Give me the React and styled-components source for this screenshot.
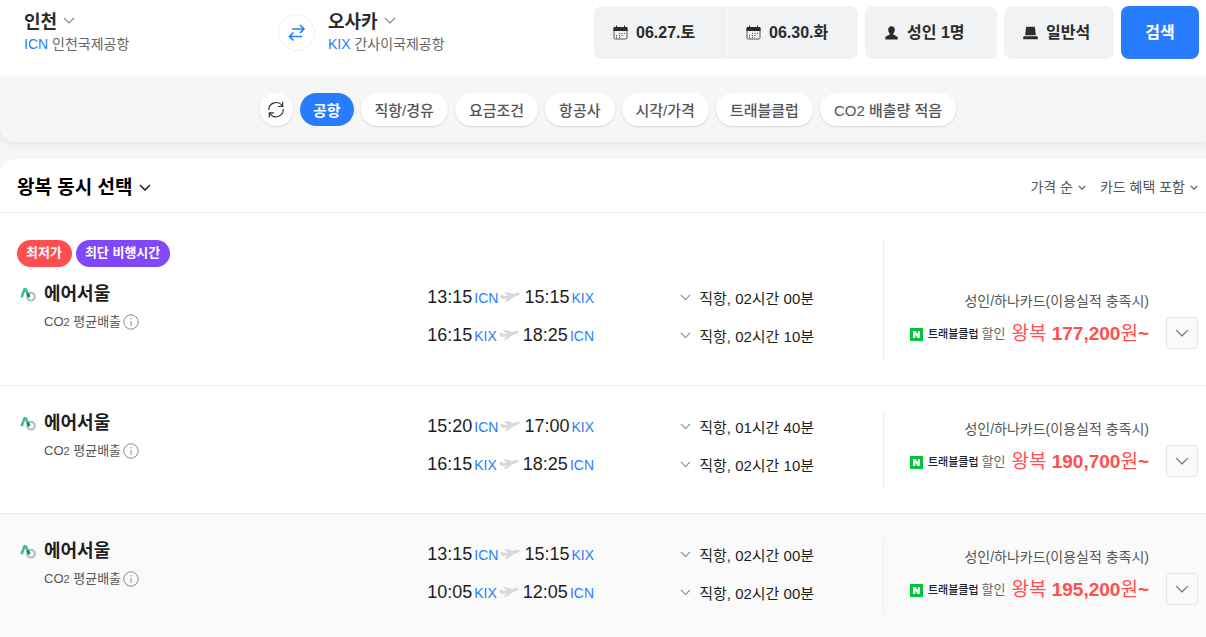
import React, { useState } from 'react';
import styled, { createGlobalStyle } from 'styled-components';

const BLUE = '#287dff';

const trips = [
  {
    id: 1,
    badges: true,
    price: '177,200',
    legs: [
      { from: 'ICN', depart: '13:15', to: 'KIX', arrive: '15:15', duration: '02시간 00분' },
      { from: 'KIX', depart: '16:15', to: 'ICN', arrive: '18:25', duration: '02시간 10분' },
    ],
  },
  {
    id: 2,
    price: '190,700',
    legs: [
      { from: 'ICN', depart: '15:20', to: 'KIX', arrive: '17:00', duration: '01시간 40분' },
      { from: 'KIX', depart: '16:15', to: 'ICN', arrive: '18:25', duration: '02시간 10분' },
    ],
  },
  {
    id: 3,
    shaded: true,
    price: '195,200',
    legs: [
      { from: 'ICN', depart: '13:15', to: 'KIX', arrive: '15:15', duration: '02시간 00분' },
      { from: 'KIX', depart: '10:05', to: 'ICN', arrive: '12:05', duration: '02시간 00분' },
    ],
  },
];

const filters = ['공항', '직항/경유', '요금조건', '항공사', '시각/가격', '트래블클럽', 'CO2 배출량 적음'];

function Chevron({ width = 12, color = '#888', stroke = 1.2 }) {
  return (
    <svg width={width} height={width / 2 + 1} viewBox="0 0 12 7" fill="none" aria-hidden="true">
      <path d="M1 1l5 5 5-5" stroke={color} strokeWidth={stroke} />
    </svg>
  );
}

function CalendarIcon() {
  return (
    <svg width="15" height="15" viewBox="0 0 15 15" aria-hidden="true">
      <rect x="1" y="2.5" width="13" height="11.5" rx="1.2" fill="#f1f2f4" stroke="#555" />
      <path d="M.5 3c0-.6.4-1 1-1h12c.6 0 1 .4 1 1v3H.5zM3 .5h1v2H3zM11 .5h1v2h-1z" fill="#2b2b2b" />
      <path d="M6 8.500h1M8.500 8.500h1M11 8.500h1M3 10.500h1M6 10.500h1M8.500 10.500h1M3 12.300h1M6 12.300h1" stroke="#444" />
    </svg>
  );
}

function PersonIcon() {
  return (
    <svg width="15" height="14" viewBox="0 0 15 14" aria-hidden="true">
      <path d="M7.500 .3c2 0 3.400 1.400 3.300 3.500 0 1.600-.6 2.800-1.500 3.600v1.200c.6.700 1.700.9 2.900 1.400 1.100.5 1.500 1.100 1.500 2.200v1.300H1.300v-1.300c0-1.100.4-1.700 1.500-2.200 1.200-.5 2.300-.7 2.900-1.400V7.400C4.800 6.600 4.200 5.400 4.200 3.800 4.100 1.700 5.500.3 7.500.3z" fill="#2b2b2b" />
    </svg>
  );
}

function SeatIcon() {
  return (
    <svg width="15" height="14" viewBox="0 0 15 14" aria-hidden="true">
      <path d="M4.200 .8h6.600c.7 0 1.100.4 1.200 1l.8 7.400H2.200L3 1.800c.1-.6.500-1 1.200-1zM.8 10.200h13.400l.6.8v2.300H.2V11z" fill="#2b2b2b" />
    </svg>
  );
}

function SwapIcon() {
  return (
    <svg width="18" height="18" viewBox="0 0 18 18" fill="none" aria-hidden="true">
      <path d="M4 5h11.500M12 1l4 4-4 4M14 12.500H2M5.500 8.500l-4 4 4 4" stroke={BLUE} strokeWidth="1.700" />
    </svg>
  );
}

function RefreshIcon() {
  return (
    <svg width="18" height="18" viewBox="0 0 18 18" fill="none" aria-hidden="true">
      <path d="M1.800 9A7.200 7.200 0 0 1 15.300 5.300M15.700 .8v4.700H11M16.200 8A7.200 7.200 0 0 1 2.700 12M2.300 16.500v-4.700H7" stroke="#333" strokeWidth="1.200" />
    </svg>
  );
}

function PlaneIcon() {
  return (
    <svg width="20" height="12" viewBox="0 0 20 12" aria-hidden="true">
      <path d="M.2 4.200l1.900-.5 2.400 1.200 3.300-.4-3.600-3L6.700.9l6.300 2.200 3.400-1.100c1.500-.5 3-.3 3.300.5.300.9-.6 1.800-2 2.300l-4.500 1.700-5.400 4.100-3 .6 2-3.700-3 .4C2.600 8 1.600 7.600 1 6.700z" fill="#d8d9db" />
    </svg>
  );
}

function AirSeoulLogo() {
  return (
    <svg width="16" height="16" viewBox="0 0 16 16" fill="none" aria-hidden="true">
      <circle cx="11" cy="10.700" r="3.800" stroke="#b8bdb9" strokeWidth="2.200" />
      <path d="M1.600 11.200L4.400 3.400h1.400l3.200 7.400" stroke="#3dbd9c" strokeWidth="2.600" strokeLinejoin="round" />
      <path d="M7.600 7.500l1.700 3.600" stroke="#148276" strokeWidth="2.600" />
    </svg>
  );
}

function InfoIcon() {
  return (
    <svg width="16" height="16" viewBox="0 0 16 16" fill="none" aria-hidden="true">
      <circle cx="8" cy="8" r="7.200" stroke="#8b8b8b" />
      <path d="M8 7v5M8 4v1.500" stroke="#8b8b8b" />
    </svg>
  );
}

function NaverIcon() {
  return (
    <svg width="13" height="13" viewBox="0 0 13 13" aria-hidden="true">
      <path d="M0 0h13v13H0z" fill="#03c341" />
      <path d="M3 3h2.500l2.200 3.300V3H10v7H7.500L5.300 6.700V10H3z" fill="#fff" />
    </svg>
  );
}

function Trip({ trip }) {
  return (
    <TripRow $shaded={trip.shaded}>
      {trip.badges && (
        <Badges>
          <Badge $color="#ff4e50">최저가</Badge>
          <Badge $color="#8048f8">최단 비행시간</Badge>
        </Badges>
      )}
      <Airline>
        <AirSeoulLogo />
        <div>
          <AirlineName>에어서울</AirlineName>
          <Emission>
            <span>CO<small>2</small> 평균배출</span>
            <IconButton type="button" aria-label="평균배출 안내"><InfoIcon /></IconButton>
          </Emission>
        </div>
      </Airline>
      <Legs>
        {trip.legs.map(leg => (
          <Leg key={leg.from}>
            <Route>
              <Time>{leg.depart}</Time>
              <Code>{leg.from}</Code>
              <PlaneIcon />
              <Time>{leg.arrive}</Time>
              <Code>{leg.to}</Code>
            </Route>
            <Duration type="button">
              <Chevron width={11} />
              {`직항, ${leg.duration}`}
            </Duration>
          </Leg>
        ))}
      </Legs>
      <Fare $tall={trip.badges}>
        <FareText>
          <Condition>성인/하나카드(이용실적 충족시)</Condition>
          <PriceLine>
            <NaverIcon />
            <Club>트래블클럽</Club>
            <Discount>할인</Discount>
            <Price>왕복 <b>{trip.price}</b>원<b>~</b></Price>
          </PriceLine>
        </FareText>
        <MoreButton type="button" aria-label="요금 더보기">
          <Chevron width={14} color="#666" stroke={1} />
        </MoreButton>
      </Fare>
    </TripRow>
  );
}

function App() {
  const [active, setActive] = useState('공항');

  return (
    <>
      <GlobalStyle />
      <SearchBar>
        <Airports>
          <Airport>
            <City type="button">인천 <Chevron /></City>
            <AirportName><em>ICN</em> 인천국제공항</AirportName>
          </Airport>
          <SwapButton type="button" aria-label="출발지 도착지 바꾸기"><SwapIcon /></SwapButton>
          <Airport>
            <City type="button">오사카 <Chevron /></City>
            <AirportName><em>KIX</em> 간사이국제공항</AirportName>
          </Airport>
        </Airports>
        <Options>
          <Dates>
            <Option type="button"><CalendarIcon />06.27.토</Option>
            <Option type="button"><CalendarIcon />06.30.화</Option>
          </Dates>
          <Option type="button"><PersonIcon />성인 1명</Option>
          <Option type="button" $narrow><SeatIcon />일반석</Option>
          <SearchButton type="button">검색</SearchButton>
        </Options>
      </SearchBar>

      <FilterBar>
        <RefreshButton type="button" aria-label="필터 초기화"><RefreshIcon /></RefreshButton>
        {filters.map(name => (
          <Chip key={name} type="button" $active={name === active} onClick={() => setActive(name)}>
            {name}
          </Chip>
        ))}
      </FilterBar>

      <Results>
        <ResultsHeader>
          <Heading>
            <button type="button">왕복 동시 선택 <Chevron color="#222" stroke={1.6} /></button>
          </Heading>
          <Sorts>
            <Sort type="button">가격 순 <Chevron width={8} color="#555" stroke={1.6} /></Sort>
            <Sort type="button">카드 혜택 포함 <Chevron width={8} color="#555" stroke={1.6} /></Sort>
          </Sorts>
        </ResultsHeader>
        {trips.map(trip => <Trip key={trip.id} trip={trip} />)}
      </Results>
    </>
  );
}

const GlobalStyle = createGlobalStyle`
  * {
    box-sizing: border-box;
  }

  body {
    margin: 0;
    background: #f6f6f6;
    color: #1e1e1e;
    font-family: "Liberation Sans", "Noto Sans CJK KR", sans-serif;
    overflow: hidden;
  }

  button {
    margin: 0;
    padding: 0;
    border: 0;
    background: none;
    color: inherit;
    font: inherit;
    white-space: nowrap;
    cursor: pointer;
  }

  svg {
    flex: none;
  }
`;

const SearchBar = styled.header`
  display: flex;
  justify-content: space-between;
  align-items: flex-start;
  padding: 6px 7px 17px 24px;
  background: #fff;
`;

const Airports = styled.div`
  display: flex;
  align-items: flex-start;
`;

const Airport = styled.div`
  min-width: 254px;

  &:last-child {
    min-width: 0;
    margin-left: 13px;
  }
`;

const City = styled.button`
  display: flex;
  align-items: center;
  gap: 6px;
  height: 28px;
  color: #2b2b2b;
  font-size: 18px;
  font-weight: 700;
`;

const AirportName = styled.div`
  color: #666;
  font-size: 14px;
  line-height: 20px;

  em {
    color: ${BLUE};
    font-style: normal;
  }
`;

const SwapButton = styled.button`
  display: grid;
  place-items: center;
  width: 37px;
  height: 37px;
  margin-top: 8px;
  border: 1px solid #eee;
  border-radius: 50%;
`;

const Options = styled.div`
  display: flex;
  gap: 7px;
`;

const Dates = styled.div`
  display: flex;
  gap: 1px;

  button:first-child {
    border-radius: 8px 0 0 8px;
  }

  button:last-child {
    width: 131px;
    border-radius: 0 8px 8px 0;
  }
`;

const Option = styled.button`
  display: flex;
  align-items: center;
  gap: 8px;
  width: ${props => props.$narrow ? 110 : 132}px;
  height: 53px;
  padding: 0 0 4px 19px;
  border-radius: 8px;
  background: #f1f2f4;
  color: #2b2b2b;
  font-size: 16px;
  font-weight: 700;

  svg {
    margin-top: 4px;
  }
`;

const SearchButton = styled.button`
  width: 78px;
  height: 53px;
  padding-bottom: 4px;
  border-radius: 8px;
  background: ${BLUE};
  color: #fff;
  font-size: 16px;
  font-weight: 700;
`;

const FilterBar = styled.nav`
  display: flex;
  justify-content: center;
  gap: 7px;
  padding: 17px 0 16px 10px;
  border-radius: 0 0 0 14px;
  background: #f6f6f6;
  box-shadow: 0 2px 6px rgba(0, 0, 0, 0.08);
`;

const RefreshButton = styled.button`
  display: grid;
  place-items: center;
  width: 33px;
  height: 33px;
  border-radius: 50%;
  background: #fff;
  box-shadow: 0 1px 2px rgba(0, 0, 0, 0.12);
`;

const Chip = styled.button`
  height: 33px;
  padding: 0 ${props => props.$active ? 13 : 14}px;
  border-radius: 17px;
  background: ${props => props.$active ? BLUE : '#fff'};
  color: ${props => props.$active ? '#fff' : '#555'};
  font-size: 15px;
  font-weight: ${props => props.$active ? 700 : 500};
  box-shadow: ${props => props.$active ? 'none' : '0 1px 2px rgba(0, 0, 0, 0.14)'};
`;

const Results = styled.main`
  margin-top: 17px;
  border-radius: 16px 0 0 0;
  background: #fff;
  overflow: hidden;
`;

const ResultsHeader = styled.div`
  display: flex;
  justify-content: space-between;
  align-items: center;
  height: 54px;
  padding: 0 8px 0 17px;
  border-bottom: 1px solid #ececec;
`;

const Heading = styled.h1`
  margin: 0;
  color: #000;
  font-size: 19px;

  button {
    display: flex;
    align-items: center;
    gap: 7px;
  }

  svg {
    margin-top: 3px;
  }
`;

const Sorts = styled.div`
  display: flex;
  gap: 14px;
`;

const Sort = styled.button`
  display: flex;
  align-items: center;
  gap: 5px;
  color: #555;
  font-size: 14px;

  svg {
    margin-top: 4px;
  }
`;

const TripRow = styled.article`
  display: grid;
  grid-template-columns: minmax(0, 9fr) minmax(0, 10fr) 315px;
  grid-template-rows: auto 1fr;
  padding: 26px 8px 26px 17px;
  border-bottom: 1px solid #ececec;
  background: ${props => props.$shaded ? '#fafafa' : '#fff'};
`;

const Badges = styled.div`
  grid-column: 1 / 3;
  display: flex;
  gap: 4px;
  height: 44px;
`;

const Badge = styled.span`
  height: 27px;
  margin-top: 1px;
  padding: 0 10px 0 9px;
  border-radius: 14px;
  background: ${props => props.$color};
  color: #fff;
  font-size: 13px;
  font-weight: 700;
  line-height: 25px;
`;

const Airline = styled.div`
  grid-column: 1;
  display: flex;
  gap: 8px;
  padding-left: 3px;

  > svg {
    margin-top: 3px;
  }
`;

const AirlineName = styled.div`
  font-size: 18px;
  font-weight: 700;
  line-height: 22px;
`;

const Emission = styled.div`
  display: flex;
  align-items: center;
  gap: 2px;
  margin-top: 8px;
  color: #555;
  font-size: 13px;
  line-height: 18px;

  small {
    font-size: 11px;
  }
`;

const IconButton = styled.button`
  display: flex;
`;

const Legs = styled.div`
  grid-column: 2;
  display: grid;
  gap: 10px;
  align-content: start;
`;

const Leg = styled.div`
  display: grid;
  grid-template-columns: 253px 1fr;
  align-items: center;
  height: 28px;
`;

const Route = styled.div`
  display: flex;
  align-items: center;
  gap: 2px;

  svg {
    margin: 0 2px 0 0;
  }
`;

const Time = styled.span`
  font-size: 18px;
`;

const Code = styled.span`
  padding-top: 2px;
  color: ${BLUE};
  font-size: 14px;
`;

const Duration = styled.button`
  display: flex;
  align-items: center;
  gap: 8px;
  font-size: 15px;
`;

const Fare = styled.div`
  grid-column: 3;
  grid-row: 1 / 3;
  display: flex;
  justify-content: space-between;
  align-items: flex-end;
  height: ${props => props.$tall ? 120 : 75}px;
  border-left: 1px solid #ececec;
`;

const FareText = styled.div`
  flex: 1;
  margin-right: 17px;
  padding-bottom: 12px;
  text-align: right;
`;

const Condition = styled.div`
  color: #555;
  font-size: 14px;
  line-height: 20px;
`;

const PriceLine = styled.div`
  display: flex;
  align-items: center;
  justify-content: flex-end;
  margin-top: 10px;
  line-height: 26px;
`;

const Club = styled.span`
  margin-left: 5px;
  color: #222;
  font-size: 11px;
  font-weight: 500;
`;

const Discount = styled.span`
  margin-left: 3px;
  color: #666;
  font-size: 13px;
`;

const Price = styled.strong`
  margin-left: 6px;
  color: #ff4e50;
  font-size: 19px;
  font-weight: 400;
`;

const MoreButton = styled.button`
  display: grid;
  place-items: center;
  width: 32px;
  height: 32px;
  margin-bottom: 10px;
  border: 1px solid #e2e5eb;
  border-radius: 4px;
  background: #f9fafc;
`;

export default App;
